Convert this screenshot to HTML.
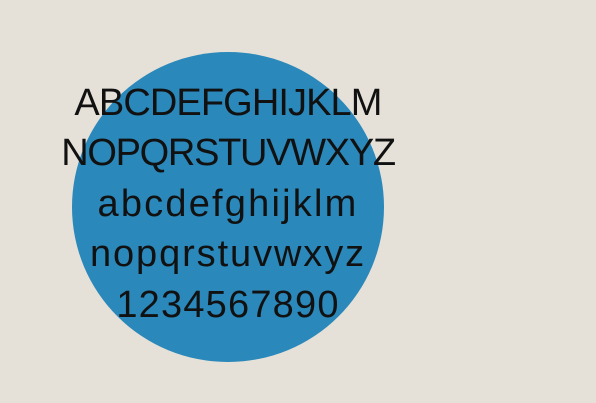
<!DOCTYPE html>
<html><head><meta charset="utf-8"><style>
html,body{margin:0;padding:0;}
body{width:596px;height:403px;background:#e6e1d8;position:relative;overflow:hidden;font-family:"Liberation Sans",sans-serif;}
.c{position:absolute;left:72px;top:52px;width:312px;height:310px;border-radius:50%;background:#2a88ba;}
.t{position:absolute;left:0;width:456px;top:77.6px;text-align:center;font-size:38px;line-height:50.5px;color:#111;}
.t div{white-space:nowrap;}
</style></head><body>
<div class="c"></div>
<div class="t">
<div style="letter-spacing:-0.9px">ABCDEFGHIJKLM</div>
<div style="letter-spacing:-1.3px">NOPQRSTUVWXYZ</div>
<div style="letter-spacing:2.2px">abcdefghijklm</div>
<div style="letter-spacing:1.9px">nopqrstuvwxyz</div>
<div style="letter-spacing:1.2px">1234567890</div>
</div>
</body></html>
